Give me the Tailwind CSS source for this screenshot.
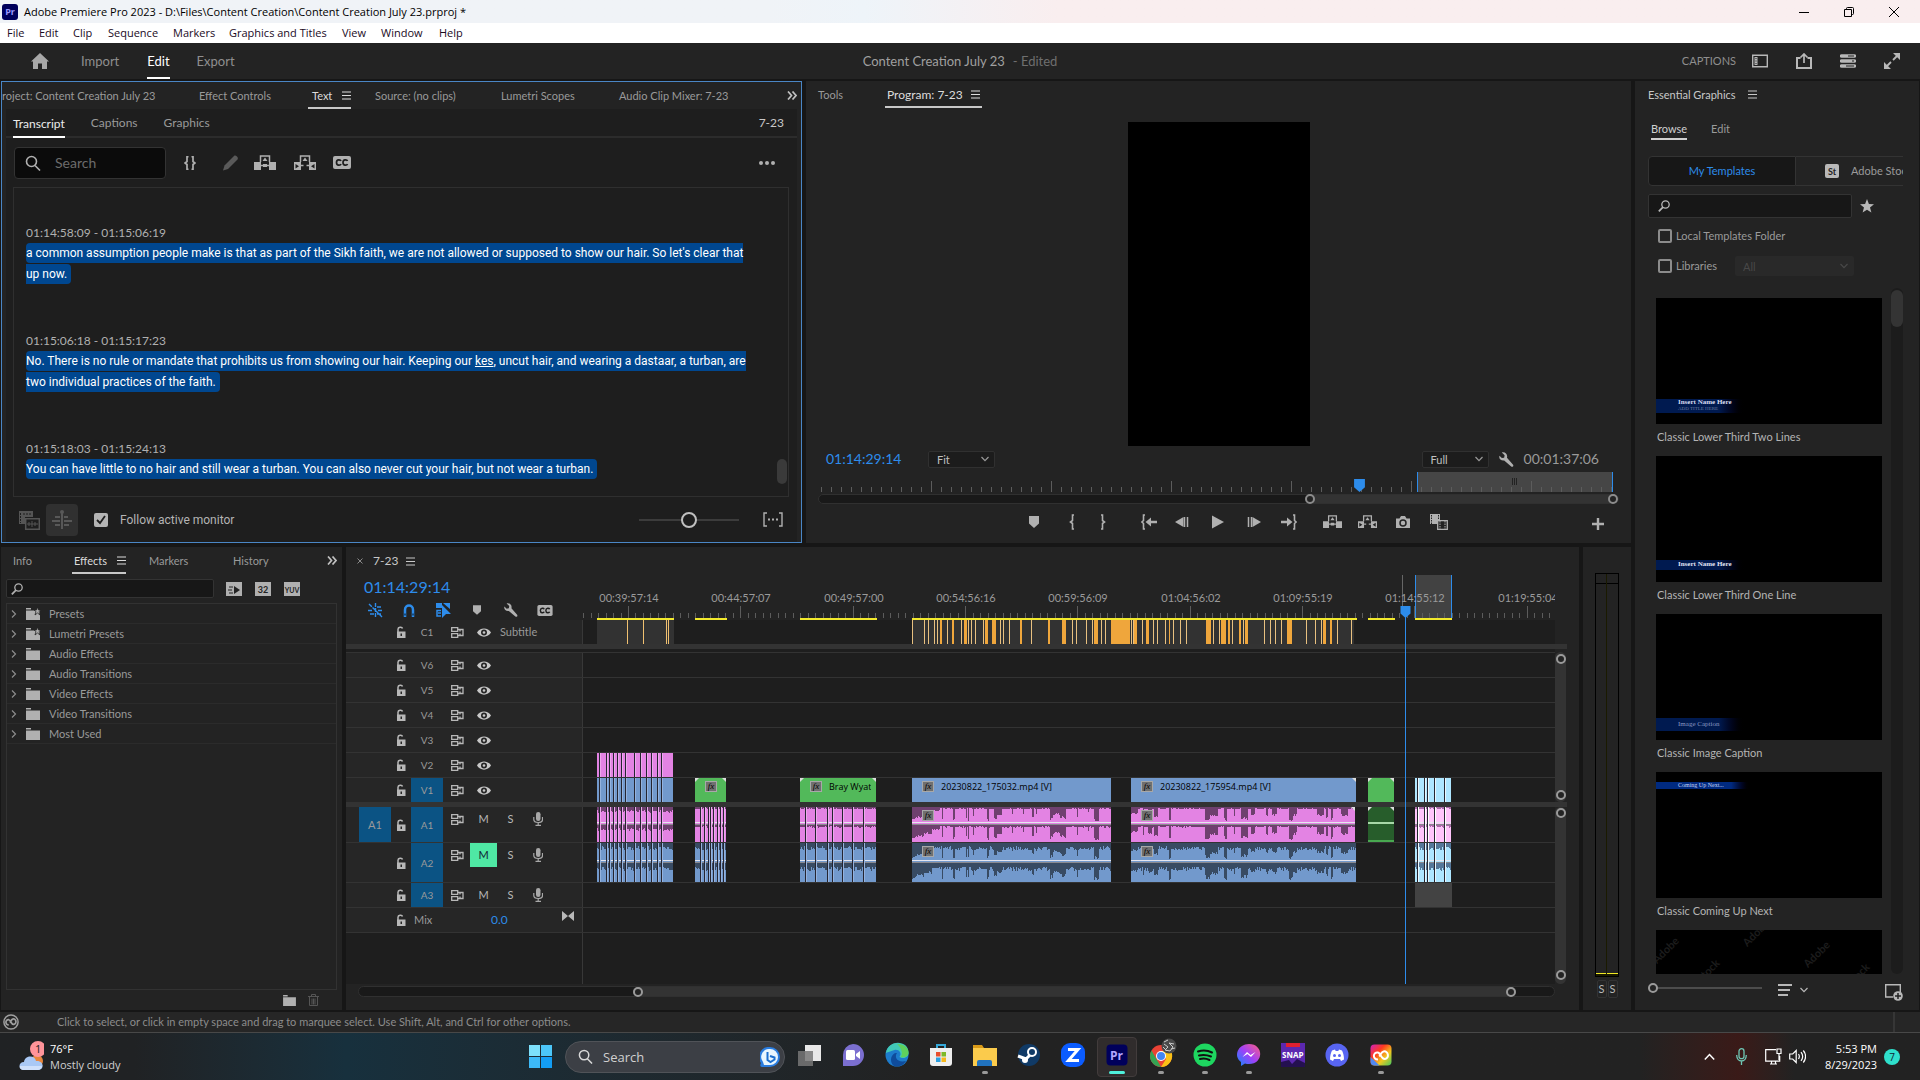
<!DOCTYPE html>
<html lang="en">
<head>
    <meta charset="UTF-8">
    <meta name="viewport" content="width=device-width, initial-scale=1.0">
    <title>Adobe Premiere Pro 2023 - Content Creation July 23</title>
    <script src="https://cdn.jsdelivr.net/npm/@tailwindcss/browser@4"></script>
</head>
<body class="h-screen overflow-hidden flex flex-col bg-[#161616] text-[#9a9a9a] text-[11px] leading-4 font-[family-name:Lato,sans-serif]">

    <!-- icon set -->
    <svg class="hidden">
        <symbol id="menu" viewBox="0 0 9 9"><path d="M0 1h9M0 4.5h9M0 8h9" stroke="currentColor" stroke-width="1.2"/></symbol>
        <symbol id="more" viewBox="0 0 10 9"><path d="M1 .5l3.5 4L1 8.500M5.500 .5l3.500 4-3.500 4" fill="none" stroke="currentColor" stroke-width="1.7"/></symbol>
        <symbol id="chev" viewBox="0 0 8 6"><path d="M.5 1L4 4.600 7.500 1" fill="none" stroke="currentColor" stroke-width="1.200"/></symbol>
        <symbol id="mag" viewBox="0 0 16 16"><circle cx="6.500" cy="6.500" r="5" fill="none" stroke="currentColor" stroke-width="1.600"/><path d="M10 10.500l5 5" stroke="currentColor" stroke-width="1.600"/></symbol>
        <symbol id="magl" viewBox="0 0 12 12"><circle cx="7.500" cy="4.500" r="3.700" fill="none" stroke="currentColor" stroke-width="1.300"/><path d="M5 7.200L.8 11.300" stroke="currentColor" stroke-width="1.800"/></symbol>
        <symbol id="lift" viewBox="0 0 22 16"><path d="M0 7h7v8H0zM15 7h7v8h-7z" fill="currentColor"/><path d="M7 10.500h2.500M12.500 10.500H15M6.500 7V1h9v6" fill="none" stroke="currentColor" stroke-width="1.500"/><path d="M11 2.500l2.500 3.500h-5zM9 9h4v3H9z" fill="currentColor"/></symbol>
        <symbol id="extract" viewBox="0 0 22 16"><path d="M0 7h7v8H0zM15 7h7v8h-7z" fill="currentColor"/><path d="M1.500 9l3.500 2.200-3.500 2.300zM20.500 9L17 11.200l3.500 2.300z" fill="#1e1e1e"/><path d="M7 10.500h2.500M12.500 10.500H15M6.500 7V1h9v6" fill="none" stroke="currentColor" stroke-width="1.500"/><path d="M11 2.500l2.500 3.500h-5z" fill="currentColor"/></symbol>
        <symbol id="cc" viewBox="0 0 18 13"><rect width="18" height="13" rx="2" fill="currentColor"/><path d="M8 5C7.500 3.500 3.500 3 3.500 6.500S7.500 9.500 8 8M14.500 5c-.5-1.500-4.500-2-4.500 1.500s4 3 4.500 1.500" fill="none" stroke="#1e1e1e" stroke-width="1.700"/></symbol>
        <symbol id="marker" viewBox="0 0 10 12"><path d="M0 0h10v7.500L5 12 0 7.500z" fill="currentColor"/></symbol>
        <symbol id="wrench" viewBox="0 0 16 16"><path d="M3 .5L6 3.500 5.500 6 3 6.500.5 4C-.5 7 2 9.500 5.500 9l7.500 6.500c1.500 1 3-.5 2-2L8.500 6C9.500 2.500 6.500-.5 3 .5z" fill="currentColor"/></symbol>
        <symbol id="folder" viewBox="0 0 14 12"><path d="M0 0h5v1.500H0zM0 2.500h14V12H0z" fill="currentColor"/></symbol>
        <symbol id="star" viewBox="0 0 14 14"><path d="M7 0l1.900 4.900 5.100.3-4 3.300 1.400 5L7 10.700l-4.400 2.800L4 8.500 0 5.200l5.100-.3z" fill="currentColor"/></symbol>
        <symbol id="lock" viewBox="0 0 10 12"><path d="M2 6V3.200C2 1 6 .5 6.500 2.500" fill="none" stroke="currentColor" stroke-width="1.500"/><path d="M1 5.500h8.500V12H1z" fill="currentColor"/><path d="M4.500 7.500h1.500v2.500H4.500z" fill="#262626"/></symbol>
        <symbol id="sync" viewBox="0 0 13 11"><path d="M.7.7h6v3.600h-6zM.7 6.700h6v3.600h-6zM6.700 2.500H12v6H6.700M9 2.500v2M9 6.500v2" fill="none" stroke="currentColor" stroke-width="1.300"/></symbol>
        <symbol id="eye" viewBox="0 0 14 9"><path d="M0 4.500C3-1 11-1 14 4.500 11 10 3 10 0 4.500z" fill="currentColor"/><circle cx="7" cy="4.500" r="3" fill="#262626"/><circle cx="7" cy="4.500" r="1.300" fill="currentColor"/></symbol>
        <symbol id="mic" viewBox="0 0 10 14"><rect x="3" width="4.500" height="9" rx="2.200" fill="currentColor"/><path d="M.8 5v2.500c0 4 8.700 4 8.700 0V5M5.200 10.500V13M2.500 13.300h5.500" fill="none" stroke="currentColor" stroke-width="1.200"/></symbol>
    </svg>

    <!-- window title -->
    <header class="flex h-[23px] shrink-0 items-center bg-linear-to-r from-[#f0f3f7] from-40% via-[#eef4f9] via-45% to-[#f9eeef] to-55% pl-0.5 text-black font-[family-name:Open_Sans,sans-serif]">
        <span class="grid size-4 place-items-center rounded-[3px] bg-[#00005b] text-[9px] font-bold text-[#9999ff]">Pr</span>
        <h1 class="ml-1.5 flex-1 whitespace-nowrap text-[11px]">Adobe Premiere Pro 2023 - D:\Files\Content Creation\Content Creation July 23.prproj *</h1>
        <button aria-label="Minimize" class="grid w-[45px] place-items-center"><svg class="size-[10px]" viewBox="0 0 10 10"><path d="M0 5.500h10" stroke="#000"/></svg></button>
        <button aria-label="Restore" class="grid w-[45px] place-items-center"><svg class="size-[10px]" viewBox="0 0 10 10"><path d="M.5 2.500h7v7h-7zM2.500 2.500v-1a1 1 0 011-1h5a1 1 0 011 1v5a1 1 0 01-1 1h-1" fill="none" stroke="#000"/></svg></button>
        <button aria-label="Close" class="mr-1 grid w-[45px] place-items-center"><svg class="size-[10px]" viewBox="0 0 10 10"><path d="M0 0l10 10M10 0L0 10" stroke="#000"/></svg></button>
    </header>
    <nav class="grid h-5 shrink-0 grid-cols-[32px_34px_35px_65px_56px_113px_39px_58px_1fr] items-center justify-items-start bg-white pl-[7px] whitespace-nowrap text-[11px] text-[#1a0a1e] font-[family-name:Open_Sans,sans-serif]">
        <button>File</button><button>Edit</button><button>Clip</button><button>Sequence</button><button>Markers</button><button>Graphics and Titles</button><button>View</button><button>Window</button><button>Help</button>
    </nav>

    <!-- workspace header -->
    <div class="grid h-9 shrink-0 grid-cols-3 bg-[#232323] text-[13px]">
        <div class="flex items-stretch pl-[31px]">
            <button aria-label="Home"><svg class="h-4 w-[18px]" viewBox="0 0 18 16"><path d="M9 0l9 8.500h-2V16h-5v-5.500H7V16H2V8.500H0z" fill="#a8a8a8"/></svg></button>
            <button class="ml-8 text-[#8f8f8f]">Import</button>
            <button class="ml-7 border-y-2 border-t-transparent border-b-white text-white">Edit</button>
            <button class="ml-[27px] text-[#8f8f8f]">Export</button>
        </div>
        <p class="flex items-center justify-center gap-2 text-[13px] text-[#a0a0a0]">Content Creation July 23 <span class="text-[#6f6f6f]">- Edited</span></p>
        <div class="flex items-center justify-end gap-7 pr-5 text-[#b8b8b8]">
            <span class="-mr-3 text-[11px] text-[#8f8f8f]">CAPTIONS</span>
            <button aria-label="Workspaces"><svg class="size-4" viewBox="0 0 16 16"><path d="M.7 2.200h14.600v11.600H.7z" fill="none" stroke="currentColor" stroke-width="1.400"/><path d="M2.500 4h3v8h-3z" fill="currentColor"/><path d="M3.500 5.500h1M3.500 8h1M3.500 10.500h1" stroke="#232323"/></svg></button>
            <button aria-label="Quick export"><svg class="size-4" viewBox="0 0 16 16"><path d="M4.500 5H1v10h14V5h-3.500" fill="none" stroke="currentColor" stroke-width="2"/><path d="M8 10V2M4.500 4.500L8 1l3.500 3.500" fill="none" stroke="currentColor" stroke-width="1.700"/></svg></button>
            <button aria-label="Progress"><svg class="size-4" viewBox="0 0 16 16"><path d="M1.500 3h13M1.500 8h13M1.500 13h13" stroke="currentColor" stroke-width="3.400" stroke-linecap="round"/><path d="M8 3h6M12 8h2M6 13h8" stroke="#232323" stroke-width="1.200"/></svg></button>
            <button aria-label="Full screen"><svg class="size-4" viewBox="0 0 16 16"><path d="M9 0h7v7zM0 9v7h7z" fill="currentColor"/><path d="M9 7l4-4M3 13l4-4" stroke="currentColor" stroke-width="1.800"/></svg></button>
        </div>
    </div>

    <main class="flex min-h-0 flex-1 gap-1 px-px pt-0.5">
        <div class="flex min-w-0 flex-1 flex-col gap-1">
            <div class="flex h-[462px] shrink-0 gap-1">

                <!-- text panel -->
                <section class="flex w-[801px] flex-col border border-[#4a86c5] bg-[#232323] px-1">
                    <div class="-ml-1 grid h-[27px] shrink-0 grid-cols-[197px_109px_67px_126px_118px_168px_1fr] items-stretch justify-items-start overflow-hidden whitespace-nowrap">
                        <button>roject: Content Creation July 23</button>
                        <button>Effect Controls</button>
                        <button class="flex items-center gap-2.5 border-y-2 border-t-transparent border-b-[#c8c8c8] pl-1 text-[#dcdcdc]">Text <svg class="size-[9px]"><use href="#menu"/></svg></button>
                        <button>Source: (no clips)</button>
                        <button>Lumetri Scopes</button>
                        <button>Audio Clip Mixer: 7-23</button>
                        <button aria-label="More panels" class="text-[#c0c0c0]"><svg class="h-[9px] w-[10px]"><use href="#more"/></svg></button>
                    </div>
                    <div class="flex min-h-0 flex-1 flex-col bg-[#1e1e1e]">
                        <div class="flex h-[29px] shrink-0 gap-[26px] border-b-2 border-[#2c2c2c] px-[7px] text-[12px]">
                            <button class="-mb-0.5 border-y-2 border-t-transparent border-b-white text-[#ececec]">Transcript</button>
                            <button>Captions</button>
                            <button>Graphics</button>
                            <span class="ml-auto self-center pr-1.5 text-[#c8c8c8]">7-23</span>
                        </div>
                        <div class="flex h-[49px] shrink-0 items-center pl-2 text-[#b0b0b0]">
                            <label class="flex h-8 w-[152px] items-center gap-3.5 rounded-sm border border-[#333] bg-[#0b0b0b] pl-2.5">
                                <svg class="size-4 shrink-0"><use href="#mag"/></svg>
                                <input type="text" aria-label="Search transcript" placeholder="Search" class="w-20 text-[14px] placeholder:text-[#6c6c6c] outline-none">
                            </label>
                            <button aria-label="Replace" class="ml-[18px]"><svg class="h-[14px] w-3" viewBox="0 0 12 14"><path d="M4.500 .7H3v4.800L1 7l2 1.500v4.800h1.500M7.500 .7H9v4.800L11 7 9 8.500v4.800H7.500" fill="none" stroke="currentColor" stroke-width="1.700"/></svg></button>
                            <button aria-label="Edit text" class="ml-[26px] text-[#5a5a5a]"><svg class="h-4 w-[17px]" viewBox="0 0 17 16"><path d="M1 15.500l1.500-5L12 1c1.500-1.500 5 1.500 3.500 3.500L6 14z" fill="currentColor"/></svg></button>
                            <button aria-label="Lift" class="ml-[15px]"><svg class="h-4 w-[22px]"><use href="#lift"/></svg></button>
                            <button aria-label="Extract" class="ml-[18px]"><svg class="h-4 w-[22px]"><use href="#extract"/></svg></button>
                            <button aria-label="Create captions" class="ml-[17px]"><svg class="h-[13px] w-[18px]"><use href="#cc"/></svg></button>
                            <button aria-label="More options" class="mr-[22px] ml-auto"><svg class="h-1 w-4" viewBox="0 0 16 4"><circle cx="2" cy="2" r="2" fill="currentColor"/><circle cx="8" cy="2" r="2" fill="currentColor"/><circle cx="14" cy="2" r="2" fill="currentColor"/></svg></button>
                        </div>
                        <div class="mr-2 ml-[7px] flex min-h-0 flex-1 justify-between overflow-hidden border border-[#2f2f2f] pl-3">
                            <div class="pt-[34px] text-[12px] leading-[21px] whitespace-nowrap">
                                <p class="text-[#b0b0b0]">01:14:58:09 - 01:15:06:19</p>
                                <p class="h-[87px] text-white font-[family-name:Roboto,sans-serif]"><span class="rounded-sm bg-[#004790] py-[3px] pr-1">a common assumption people make is that as part of the Sikh faith, we are not allowed or supposed to show our hair. So let's clear that<br>up now.</span></p>
                                <p class="text-[#b0b0b0]">01:15:06:18 - 01:15:17:23</p>
                                <p class="h-[87px] text-white font-[family-name:Roboto,sans-serif]"><span class="rounded-sm bg-[#004790] py-[3px] pr-1">No. There is no rule or mandate that prohibits us from showing our hair. Keeping our <u>kes</u>, uncut hair, and wearing a dastaar, a turban, are<br>two individual practices of the faith.</span></p>
                                <p class="text-[#b0b0b0]">01:15:18:03 - 01:15:24:13</p>
                                <p class="text-white font-[family-name:Roboto,sans-serif]"><span class="rounded-sm bg-[#004790] py-[3px] pr-1">You can have little to no hair and still wear a turban. You can also never cut your hair, but not wear a turban.</span></p>
                            </div>
                            <div class="mr-px mb-3 h-[25px] w-2.5 self-end rounded-full bg-[#3a3a3a]"></div>
                        </div>
                        <div class="flex h-[45px] shrink-0 items-center pl-3">
                            <button aria-label="Sequence media" class="text-[#555]"><svg class="h-5 w-[22px]" viewBox="0 0 22 20"><path d="M1 1h14v6H7v7H1z" fill="currentColor"/><path d="M2.500 3v10M5 4h9" stroke="#1e1e1e" stroke-dasharray="2 1"/><path d="M7.700 8.700h13.600v10.600H7.700z" fill="#1e1e1e" stroke="currentColor" stroke-width="1.500"/><path d="M9 14h11M11 12v4M14 11v6M17 12v4" stroke="currentColor"/></svg></button>
                            <button aria-label="Show pauses" class="ml-1.5 grid h-8 w-8 place-items-center rounded-sm bg-[#303030] text-[#585858]"><svg class="h-5 w-[22px]" viewBox="0 0 22 20"><path d="M11 1v18M4 7h5M13 7h4M1 11h8M13 11h8M4 15h5M13 15h5" stroke="currentColor" stroke-width="2"/><circle cx="11" cy="2" r="2" fill="currentColor"/></svg></button>
                            <label class="ml-4 flex items-center gap-3 text-[12px] text-[#b4b4b4] font-[family-name:Roboto,sans-serif]">
                                <span class="relative grid size-3.5 place-items-center">
                                    <input type="checkbox" checked class="size-3.5 appearance-none rounded-xs bg-[#b4b4b4]">
                                    <svg class="pointer-events-none absolute size-2.5" viewBox="0 0 10 10"><path d="M1 5l3 3 5-7" fill="none" stroke="#1e1e1e" stroke-width="1.800"/></svg>
                                </span>
                                Follow active monitor
                            </label>
                            <input type="range" aria-label="Text size" value="50" class="mr-6 ml-auto h-4 w-[100px] appearance-none bg-transparent [&::-webkit-slider-runnable-track]:h-0.5 [&::-webkit-slider-runnable-track]:bg-[#3c3c3c] [&::-webkit-slider-thumb]:-mt-[7px] [&::-webkit-slider-thumb]:size-4 [&::-webkit-slider-thumb]:appearance-none [&::-webkit-slider-thumb]:rounded-full [&::-webkit-slider-thumb]:border-2 [&::-webkit-slider-thumb]:border-[#c0c0c0] [&::-webkit-slider-thumb]:bg-[#1e1e1e]">
                            <button aria-label="Pauses" class="mr-[14px]"><svg class="h-[15px] w-5" viewBox="0 0 20 15"><path d="M4 1H1v13h3M16 1h3v13h-3" fill="none" stroke="#b0b0b0" stroke-width="1.400"/><path d="M5 7.500h2M9 7.500h2M13 7.500h2" stroke="#b0b0b0" stroke-width="2"/></svg></button>
                        </div>
                    </div>
                </section>

                <!-- program monitor -->
                <section class="flex min-w-0 flex-1 flex-col bg-[#232323] px-3">
                    <div class="flex h-[27px] shrink-0 items-stretch">
                        <button class="w-[67px] text-left">Tools</button>
                        <button class="flex items-center gap-2 border-y-2 border-t-transparent border-b-[#c8c8c8] px-0.5 text-[12px] text-[#dcdcdc]">Program: 7-23 <svg class="size-[9px]"><use href="#menu"/></svg></button>
                    </div>
                    <div class="mx-auto mt-3.5 h-[324px] w-[182px] shrink-0 bg-black"></div>
                    <div class="flex h-[26px] shrink-0 items-center pr-5 pl-2">
                        <span class="w-[102px] text-[14px] text-[#2d8ceb]">01:14:29:14</span>
                        <label class="relative flex items-center"><select aria-label="Zoom level" class="h-[17px] w-[67px] appearance-none rounded-xs border border-[#303030] bg-[#1c1c1c] pl-2 text-[11px] leading-none text-[#c0c0c0]"><option>Fit</option></select><svg class="pointer-events-none absolute right-1.5 h-1.5 w-2"><use href="#chev"/></svg></label>
                        <label class="relative ml-auto flex items-center"><select aria-label="Playback resolution" class="h-[17px] w-[67px] appearance-none rounded-xs border border-[#303030] bg-[#1c1c1c] pl-2 text-[11px] leading-none text-[#c0c0c0]"><option>Full</option></select><svg class="pointer-events-none absolute right-1.5 h-1.5 w-2"><use href="#chev"/></svg></label>
                        <button aria-label="Settings" class="mx-2.5 text-[#b0b0b0]"><svg class="size-[15px]"><use href="#wrench"/></svg></button>
                        <span class="text-[14px]">00:01:37:06</span>
                    </div>
                    <div class="relative h-5 shrink-0">
                        <div class="absolute left-[599px] h-5 w-[196px] border-x border-[#2d8ceb] bg-[#464646]"></div>
                        <svg id="programRuler" class="absolute h-5 w-full"></svg>
                        <svg class="absolute top-[7px] left-[536px] h-[13px] w-[11px] text-[#2d8ceb]" viewBox="0 0 10 12"><use href="#marker"/></svg>
                    </div>
                    <div class="mt-0.5 flex h-[10px] shrink-0 items-center rounded-full border border-[#303030] bg-[#191919]">
                        <div class="ml-[490px] flex h-2 w-[308px] items-center justify-between bg-[#333]"><i class="-ml-1 size-2.5 rounded-full border-2 border-[#8c8c8c] bg-[#232323]"></i><i class="-mr-px size-2.5 rounded-full border-2 border-[#8c8c8c] bg-[#232323]"></i></div>
                    </div>
                    <div class="mt-2.5 flex items-center justify-between pr-[15px] text-[#b0b0b0]">
                        <span class="w-[211px]"></span>
                        <div class="grid flex-1 grid-cols-[38px_31px_43px_34px_37px_35px_34px_42px_35px_38px_34px_20px] items-center justify-items-start [&_svg]:h-[16px]">
                            <button aria-label="Add marker"><svg class="w-2.5"><use href="#marker"/></svg></button>
                            <button aria-label="Mark in"><svg class="w-2.5" viewBox="0 0 10 16"><path d="M7 1H5.500v5.500L3.500 8l2 1.500V15H7" fill="none" stroke="currentColor" stroke-width="1.600"/></svg></button>
                            <button aria-label="Mark out"><svg class="w-2.5" viewBox="0 0 10 16"><path d="M3 1h1.500v5.500l2 1.500-2 1.500V15H3" fill="none" stroke="currentColor" stroke-width="1.600"/></svg></button>
                            <button aria-label="Go to in"><svg class="w-4" viewBox="0 0 16 16"><path d="M4 1H2.500v5.500L1 8l1.500 1.500V15H4" fill="none" stroke="currentColor" stroke-width="1.600"/><path d="M4.500 8L10 3.500v9z" fill="currentColor"/><path d="M9 8h7" stroke="currentColor" stroke-width="2.500"/></svg></button>
                            <button aria-label="Step back"><svg class="w-3.5" viewBox="0 0 14 16"><path d="M8.500 3v10L0 8z" fill="currentColor"/><path d="M9.500 3v10M12.500 3v10" stroke="currentColor" stroke-width="1.500"/></svg></button>
                            <button aria-label="Play"><svg class="w-3" viewBox="0 0 12 16"><path d="M0 1.500L12 8 0 14.500z" fill="currentColor"/></svg></button>
                            <button aria-label="Step forward"><svg class="w-3.5" viewBox="0 0 14 16"><path d="M5.500 3v10L14 8z" fill="currentColor"/><path d="M1.500 3v10M4.500 3v10" stroke="currentColor" stroke-width="1.500"/></svg></button>
                            <button aria-label="Go to out"><svg class="w-4" viewBox="0 0 16 16"><path d="M12 1h1.500v5.500L15 8l-1.500 1.500V15H12" fill="none" stroke="currentColor" stroke-width="1.600"/><path d="M11.500 8L6 3.500v9z" fill="currentColor"/><path d="M0 8h7" stroke="currentColor" stroke-width="2.500"/></svg></button>
                            <button aria-label="Lift"><svg class="w-[19px]"><use href="#lift"/></svg></button>
                            <button aria-label="Extract"><svg class="w-[19px]"><use href="#extract"/></svg></button>
                            <button aria-label="Export frame"><svg class="w-3.5" viewBox="0 0 14 16"><path d="M0 4.500h3.500L5 2h4l1.500 2.500H14V14H0z" fill="currentColor"/><circle cx="7" cy="9" r="3" fill="none" stroke="#232323" stroke-width="1.500"/></svg></button>
                            <button aria-label="Comparison view"><svg class="w-[18px]" viewBox="0 0 18 16"><path d="M0 0h10v10H0z" fill="currentColor"/><path d="M1.500 1v9M8.500 1v4" stroke="#232323" stroke-dasharray="1.500 1"/><path d="M7.700 6.700h9.600v8.600H7.700z" fill="#232323" stroke="currentColor" stroke-width="1.300"/><path d="M10 7v8M15 7v8" stroke="currentColor" stroke-dasharray="1.500 1"/></svg></button>
                        </div>
                        <button aria-label="Button editor" class="mt-1"><svg class="size-3" viewBox="0 0 12 12"><path d="M6 0v12M0 6h12" stroke="currentColor" stroke-width="2.400"/></svg></button>
                    </div>
                </section>
            </div>

            <div class="flex min-h-0 flex-1 gap-1">
                <!-- effects -->
                <section class="flex w-[341px] shrink-0 flex-col bg-[#232323] px-[5px]">
                    <div class="grid h-[27px] shrink-0 grid-cols-[59px_77px_84px_94px_1fr] items-stretch justify-items-start pl-[7px]">
                        <button>Info</button>
                        <button class="flex items-center gap-2.5 border-y-2 border-t-transparent border-b-[#c8c8c8] pl-0.5 text-[#dcdcdc]">Effects <svg class="size-[9px]"><use href="#menu"/></svg></button>
                        <button>Markers</button>
                        <button>History</button>
                        <button aria-label="More panels" class="text-[#c0c0c0]"><svg class="h-[9px] w-[10px]"><use href="#more"/></svg></button>
                    </div>
                    <div class="mt-[5px] flex h-[19px] shrink-0 items-center text-[#b0b0b0]">
                        <label class="flex h-[19px] w-[208px] items-center gap-2 rounded-xs border border-[#333] bg-[#171717] pl-1"><svg class="size-3 shrink-0"><use href="#magl"/></svg><input type="text" aria-label="Search effects" class="w-40 outline-none"></label>
                        <div class="ml-3 flex gap-[13px] text-[9px] leading-3 font-bold text-[#232323]">
                            <button class="h-3.5 w-4 border-t-2 border-dotted border-[#b0b0b0] bg-[#b0b0b0]" aria-label="Accelerated effects"><svg class="mx-auto h-2 w-3" viewBox="0 0 12 8"><path d="M1 1h4M0 4h4M1 7h4" stroke="#232323"/><path d="M6 0l6 4-6 4z" fill="#232323"/></svg></button>
                            <button class="h-3.5 w-4 border-t-2 border-dotted border-[#b0b0b0] bg-[#b0b0b0]">32</button>
                            <button class="h-3.5 w-4 border-t-2 border-dotted border-[#b0b0b0] bg-[#b0b0b0] text-[7px]">YUV</button>
                        </div>
                    </div>
                    <ul id="effects" class="mt-[5px] min-h-0 flex-1 border border-[#323232] text-[11px]"></ul>
                    <div class="flex h-5 shrink-0 items-center justify-end gap-3 pr-[18px]"><button aria-label="New bin"><svg class="h-[11px] w-[13px] text-[#b0b0b0]"><use href="#folder"/></svg></button><button aria-label="Delete"><svg class="h-3 w-[11px]" viewBox="0 0 11 12"><path d="M0 2.500h11M3.500 2V.5h4V2M1.500 3v8.500h8V3M4 4.500v6M5.500 4.500v6M7 4.500v6" fill="none" stroke="#555"/></svg></button></div>
                </section>

                <!-- timeline -->
                <section class="relative flex min-w-0 flex-1 flex-col bg-[#232323]">
                    <div class="flex h-[73px] shrink-0">
                        <div class="w-[237px] shrink-0">
                            <div class="flex h-7 items-center pl-[11px] text-[12px] text-[#c8c8c8]"><button aria-label="Close sequence"><svg class="size-1.5" viewBox="0 0 6 6"><path d="M.5.5l5 5M5.500.5l-5 5" stroke="#8a8a8a"/></svg></button><span class="ml-2.5 w-[33px]">7-23</span><svg class="size-[9px]"><use href="#menu"/></svg></div>
                            <div class="pl-[18px] text-[16px] leading-6 text-[#2d8ceb]">01:14:29:14</div>
                            <div class="mt-[3px] flex h-4 items-center pl-[22px] text-[#b0b0b0]">
                                <button aria-label="Nest" class="w-[35px] text-[#2d8ceb]"><svg class="size-[15px]" viewBox="0 0 15 15"><path d="M7.500 0v15M0 7.500h5M10 7.500h5M2 11h4M9 11h4M9 4h4M1 1l13 13" stroke="currentColor" stroke-width="1.400" stroke-dasharray="4 1"/></svg></button>
                                <button aria-label="Snap" class="w-[33px] text-[#2d8ceb]"><svg class="h-[13px] w-3" viewBox="0 0 12 13"><path d="M2 13V6c0-6 8-6 8 0v7" fill="none" stroke="currentColor" stroke-width="2.500"/><path d="M.7 10.500h2.600M8.700 10.500h2.600" stroke="#164a7c" stroke-width="2"/></svg></button>
                                <button aria-label="Linked selection" class="w-[37px] text-[#2d8ceb]"><svg class="size-[15px]" viewBox="0 0 15 15"><path d="M0 0h6v5H0zM7 0h7v6zM6 2l9 9H10l-4 4z" fill="currentColor"/><path d="M5 7.500H1V13h4M2 10h3" fill="none" stroke="currentColor" stroke-width="1.500"/></svg></button>
                                <button aria-label="Add marker" class="w-[31px]"><svg class="h-2.5 w-2"><use href="#marker"/></svg></button>
                                <button aria-label="Timeline settings" class="w-[33px]"><svg class="size-3.5"><use href="#wrench"/></svg></button>
                                <button aria-label="Captions"><svg class="h-[11px] w-4"><use href="#cc"/></svg></button>
                            </div>
                        </div>
                        <div id="ruler" class="relative flex-1 overflow-hidden">
                            <div class="absolute top-7 left-[832px] h-[43px] w-[37px] border-x border-[#2d8ceb] bg-[#424242]"></div>
                            <svg id="rulerTicks" class="absolute inset-0 size-full"></svg>
                            <div class="absolute top-7 left-[819px] h-8 w-px bg-[#666]"></div>
                        </div>
                        <div class="w-6"></div>
                    </div>
                    <div class="flex min-h-0 flex-1 bg-[#1e1e1e]">
                        <div id="tracks" class="flex min-w-0 flex-1 flex-col"></div>
                        <div class="flex w-6 flex-col bg-[#232323]">
                            <div class="mt-6 h-[5px] w-3 bg-[#333]"></div>
                            <div class="mt-[3px] flex h-[150px] w-[11px] flex-col items-center justify-between rounded-full bg-[#333] py-0.5"><i class="size-2.5 rounded-full border-2 border-[#9a9a9a] bg-[#232323]"></i><i class="size-2.5 rounded-full border-2 border-[#9a9a9a] bg-[#232323]"></i></div>
                            <div class="h-[5px] w-3 bg-[#333]"></div>
                            <div class="flex min-h-0 w-[11px] flex-1 flex-col items-center justify-between rounded-full bg-[#333] pt-px pb-1"><i class="size-2.5 rounded-full border-2 border-[#9a9a9a] bg-[#232323]"></i><i class="size-2.5 rounded-full border-2 border-[#9a9a9a] bg-[#232323]"></i></div>
                        </div>
                    </div>
                    <div class="flex h-[26px] shrink-0 pt-0.5 pr-6 pl-3">
                        <div class="flex h-[11px] w-full items-center rounded-full border border-[#303030] bg-[#191919] pr-[38px] pl-[274px]"><div class="flex h-[9px] flex-1 items-center justify-between rounded-full bg-[#333]"><i class="size-2.5 rounded-full border-2 border-[#9a9a9a] bg-[#232323]"></i><i class="size-2.5 rounded-full border-2 border-[#9a9a9a] bg-[#232323]"></i></div></div>
                    </div>
                    <!-- playhead lies over ruler and tracks -->
                    <svg class="absolute top-[59px] left-[1054px] h-3 w-[11px] text-[#2d8ceb]"><use href="#marker"/></svg>
                    <div class="absolute top-[70px] bottom-[26px] left-[1059px] w-px bg-[#2d8ceb]"></div>
                </section>

                <!-- audio meters -->
                <section class="flex w-12 shrink-0 flex-col items-center bg-[#232323] pt-[26px] pb-3">
                    <div class="grid w-6 flex-1 grid-cols-2 divide-x divide-black border border-black">
                        <div class="flex flex-col justify-between border-b-2 border-[#1a1a00]"><i class="h-2.5 border-b border-black"></i><i class="h-px bg-[#f0e824]"></i></div>
                        <div class="flex flex-col justify-between border-b-2 border-[#1a1a00]"><i class="h-2.5 border-b border-black"></i><i class="h-px bg-[#f0e824]"></i></div>
                    </div>
                    <div class="mt-[3px] flex gap-px text-[#b8b8b8]"><button class="h-[18px] w-2.5 rounded-xs border border-[#333]">S</button><button class="h-[18px] w-2.5 rounded-xs border border-[#333]">S</button></div>
                </section>
            </div>
        </div>

        <!-- essential graphics -->
        <section class="flex w-[284px] shrink-0 flex-col bg-[#232323] pl-[13px]">
            <h2 class="flex h-[27px] shrink-0 items-center gap-3 text-[11px] text-[#c8c8c8]">Essential Graphics <svg class="size-[9px]"><use href="#menu"/></svg></h2>
            <div class="mt-2.5 flex h-[22px] shrink-0 gap-6 pl-[3px]"><button class="border-y-2 border-t-transparent border-b-[#d0d0d0] text-[#d0d0d0]">Browse</button><button>Edit</button></div>
            <div class="mt-4 mr-4 flex h-[30px] shrink-0 overflow-hidden whitespace-nowrap">
                <button class="w-[148px] shrink-0 rounded-l-sm border border-[#333] bg-[#171717] text-[#2d8ceb]">My Templates</button>
                <button class="flex w-40 shrink-0 items-center gap-3 border-y border-[#333] pl-[29px]"><span class="grid size-3.5 place-items-center rounded-xs bg-[#b8b8b8] text-[9px] font-bold text-[#232323]">St</span>Adobe Stock</button>
            </div>
            <div class="mt-2 flex h-6 shrink-0 items-center gap-2 text-[#b8b8b8]">
                <label class="flex h-6 w-[204px] items-center gap-2 rounded-xs border border-[#333] bg-[#171717] pl-[9px]"><svg class="size-3 shrink-0"><use href="#magl"/></svg><input type="text" aria-label="Search templates" class="w-40 outline-none"></label>
                <button aria-label="Favorites"><svg class="size-3.5"><use href="#star"/></svg></button>
            </div>
            <div class="mt-2 flex h-5 shrink-0 items-center pl-2.5"><label class="flex items-center gap-1"><input type="checkbox" class="size-3.5 appearance-none rounded-xs border-2 border-[#8c8c8c]">Local Templates Folder</label></div>
            <div class="mt-2.5 flex h-5 shrink-0 items-center pl-2.5"><label class="flex w-[77px] items-center gap-1"><input type="checkbox" class="size-3.5 appearance-none rounded-xs border-2 border-[#8c8c8c]">Libraries</label>
                <label class="relative flex items-center text-[#484848]"><select aria-label="Library" disabled class="h-5 w-[119px] appearance-none rounded-xs bg-[#292929] pl-2 text-[11px] leading-none text-[#484848]"><option>All</option></select><svg class="pointer-events-none absolute right-1.5 h-1.5 w-2"><use href="#chev"/></svg></label>
            </div>
            <div class="mt-3 mr-4 flex min-h-0 flex-1 justify-between overflow-hidden pl-2">
                <div class="w-[226px] pt-2.5 text-[#b4b4b4]">
                    <figure class="mb-[7px]">
                        <div class="flex h-[126px] flex-col justify-end bg-black pb-[11px] font-[family-name:Liberation_Serif,serif]"><div class="h-3.5 w-[90px] bg-linear-to-r from-[#001a50] from-70% to-black pl-[22px] text-[7px] leading-[7px] text-[#6a7aa0]"><b class="block whitespace-nowrap text-[#d8dcf0]">Insert Name Here</b><span class="block text-[5px] leading-[6px] whitespace-nowrap">ADD TITLE HERE</span></div></div>
                        <figcaption class="flex h-[25px] items-center pl-px">Classic Lower Third Two Lines</figcaption>
                    </figure>
                    <figure class="mb-[7px]">
                        <div class="flex h-[126px] flex-col justify-end bg-black pb-3 font-[family-name:Liberation_Serif,serif]"><div class="h-2.5 w-[90px] bg-linear-to-r from-[#001a50] from-70% to-black pl-[22px] text-[7px] leading-[9px] whitespace-nowrap text-[#e0e4f4]"><b>Insert Name Here</b></div></div>
                        <figcaption class="flex h-[25px] items-center pl-px">Classic Lower Third One Line</figcaption>
                    </figure>
                    <figure class="mb-[7px]">
                        <div class="flex h-[126px] flex-col justify-end bg-black pb-[9px] font-[family-name:Liberation_Serif,serif]"><div class="h-[13px] w-[90px] bg-linear-to-r from-[#001a50] from-70% to-black pl-[22px] text-[7px] leading-[13px] whitespace-nowrap text-[#8a98c0]">Image Caption</div></div>
                        <figcaption class="flex h-[25px] items-center pl-px">Classic Image Caption</figcaption>
                    </figure>
                    <figure class="mb-[7px]">
                        <div class="h-[126px] bg-black pt-2.5 font-[family-name:Liberation_Serif,serif]"><div class="h-[7px] w-[94px] bg-linear-to-r from-[#002a80] from-80% to-black pl-[22px] text-[6px] leading-[7px] whitespace-nowrap text-[#c8d4f4]">Coming Up Next...</div></div>
                        <figcaption class="flex h-[25px] items-center pl-px">Classic Coming Up Next</figcaption>
                    </figure>
                    <div class="relative h-[126px] overflow-hidden bg-black text-[11px] font-bold text-[#1c1c1c]">
                        <span class="absolute top-6 left-px -rotate-45 origin-bottom-left pl-1">Adobe</span><span class="absolute top-1 left-[94px] -rotate-45 origin-bottom-left">Adobe</span><span class="absolute top-7 left-[152px] -rotate-45 origin-bottom-left pl-1">Adobe</span><span class="absolute top-10 left-[48px] -rotate-45 origin-bottom-left">Stock</span><span class="absolute top-11 left-[198px] -rotate-45 origin-bottom-left">Stock</span>
                    </div>
                </div>
                <div class="w-3 rounded-full bg-[#1c1c1c] pt-0.5"><div class="h-[37px] rounded-full bg-[#343434]"></div></div>
            </div>
            <div class="flex h-9 shrink-0 items-start pt-1.5 pr-4">
                <input type="range" aria-label="Thumbnail size" value="0" class="h-4 w-[114px] appearance-none bg-transparent [&::-webkit-slider-runnable-track]:h-0.5 [&::-webkit-slider-runnable-track]:bg-[#4c4c4c] [&::-webkit-slider-thumb]:-mt-1 [&::-webkit-slider-thumb]:size-2.5 [&::-webkit-slider-thumb]:appearance-none [&::-webkit-slider-thumb]:rounded-full [&::-webkit-slider-thumb]:border-2 [&::-webkit-slider-thumb]:border-[#9a9a9a] [&::-webkit-slider-thumb]:bg-[#232323]">
                <button aria-label="Sort" class="mt-1 ml-4 flex items-center gap-2 text-[#b8b8b8]"><svg class="h-3 w-3.5" viewBox="0 0 14 12"><path d="M0 1h14M0 6h12M0 11h10" stroke="currentColor" stroke-width="1.800"/></svg><svg class="h-1.5 w-2"><use href="#chev"/></svg></button>
                <button aria-label="New item" class="mt-1 ml-auto text-[#b8b8b8]"><svg class="h-[17px] w-[18px]" viewBox="0 0 18 17"><path d="M8 13H.7V.7h14.600V8" fill="none" stroke="currentColor" stroke-width="1.400"/><circle cx="13" cy="12" r="4.800" fill="currentColor"/><path d="M13 9v6M10 12h6" stroke="#232323" stroke-width="1.500"/></svg></button>
            </div>
        </section>
    </main>

    <!-- status bar -->
    <footer class="mt-0.5 flex h-[21px] shrink-0 items-center border-b border-[#484848] bg-[#262626] pl-[3px] text-[#8c8c8c]">
        <svg class="size-4" viewBox="0 0 14 14"><circle cx="7" cy="7" r="6.200" fill="none" stroke="#a0a0a0" stroke-width="1.300"/><path d="M5 9.500c-3.500 0-3-5 0-4.500 2 .5 2 4.500 4.500 4 3-.6 2-5.500-1-4.500-1.500.5-1.500 2-2.500 3" fill="none" stroke="#a0a0a0" stroke-width="1.500"/></svg>
        <p class="ml-[38px]">Click to select, or click in empty space and drag to marquee select. Use Shift, Alt, and Ctrl for other options.</p>
        <span class="mr-[25px] ml-auto h-full w-0.5 bg-[#363636]"></span>
    </footer>

    <!-- windows taskbar -->
    <div class="grid h-[47px] shrink-0 grid-cols-[529px_1fr_280px] items-center bg-linear-to-r from-[#202224] from-7% via-[#17303d] via-18% to-[#222] to-48% text-[12px] text-white font-[family-name:Open_Sans,sans-serif]">
        <button class="flex items-center gap-1.5 pl-[18px] text-left">
            <svg class="h-8 w-[26px]" viewBox="0 0 26 32"><circle cx="19" cy="20" r="6" fill="#e8863c"/><path d="M6 29c-6 0-6-8 0-8 1-7 11-7 12-1 8-1 9 9 2 9z" fill="#a9c8f5"/><path d="M6 29c-3 0-5-2-4-4h22c0 2-2 4-4 4z" fill="#cfe0fb"/><circle cx="20" cy="8" r="8" fill="#ff949a"/><text x="17" y="12" font-size="11" fill="#222">1</text></svg>
            <span class="text-[11px] leading-4"><span class="block">76°F</span><span class="block text-[#d0d0d0]">Mostly cloudy</span></span>
        </button>
        <div class="flex items-center">
            <button aria-label="Start"><svg class="size-[23px]" viewBox="0 0 23 23"><path d="M0 0h11v11H0z" fill="#7de0fb"/><path d="M12 0h11v11H12z" fill="#4cc6f8"/><path d="M0 12h11v11H0z" fill="#3db9f7"/><path d="M12 12h11v11H12z" fill="#139df4"/></svg></button>
            <label class="ml-[13px] flex h-8 w-[220px] items-center gap-2.5 rounded-full border border-[#505358] bg-[#3c3f45] pr-1 pl-3">
                <svg class="size-[15px] shrink-0 text-[#d8d8d8]"><use href="#mag"/></svg>
                <input type="text" aria-label="Taskbar search" placeholder="Search" class="min-w-0 flex-1 text-[13px] placeholder:text-[#d0d0d0] outline-none">
                <svg class="size-5 shrink-0" viewBox="0 0 20 20"><path d="M10 0a10 10 0 110 20H2c-2 0-2-2-1-4A10 10 0 0110 0z" fill="#2a7de0"/><path d="M10 2a8 8 0 110 16H4l-1-3A8 8 0 0110 2z" fill="#e8f6ff"/><path d="M7.500 5v8l3 2 4-2.500v-2L10 9" fill="none" stroke="#1b6fd0" stroke-width="2"/></svg>
            </label>
            <div id="apps" class="ml-0.5 flex"></div>
        </div>
        <div class="flex h-full items-center bg-linear-to-r from-[#222] via-[#3a1a18] via-35% to-[#222] to-55% pl-[60px] whitespace-nowrap">
            <button aria-label="Hidden icons"><svg class="ml-1 h-2 w-[11px]" viewBox="0 0 11 8"><path d="M.8 6.500l4.700-5 4.700 5" fill="none" stroke="#fff" stroke-width="1.500"/></svg></button>
            <svg class="ml-[21px] h-[17px] w-[11px]" viewBox="0 0 11 17"><rect x="3" y=".7" width="5" height="10" rx="2.500" fill="none" stroke="#6fc7b5" stroke-width="1.300"/><path d="M.7 7c0 8 9.600 8 9.600 0M5.500 13v4" fill="none" stroke="#6fc7b5" stroke-width="1.300"/></svg>
            <svg class="ml-[18px] size-[17px]" viewBox="0 0 17 17"><path d="M11 1.600H.7v11.600h14V8M5 16h7M6.500 13v3M10.500 13v3M12 1h4v4.500h-4zM14 5.500V12" fill="none" stroke="#fff" stroke-width="1.200"/></svg>
            <svg class="ml-[7px] h-[15px] w-[17px]" viewBox="0 0 17 15"><path d="M.7 5h3l3.500-3.500v12L3.700 10h-3zM9.500 5c1 1.500 1 3.500 0 5M12 3.200c2 2.500 2 6 0 8.600M14.300 1.500c3 3.500 3 8.500 0 12" fill="none" stroke="#fff" stroke-width="1.200"/></svg>
            <p class="ml-auto text-right text-[11px] leading-4"><span class="block">5:53 PM</span><span class="block">8/29/2023</span></p>
            <span class="mr-5 ml-[7px] grid size-4 place-items-center rounded-full bg-[#2fe0cc] text-[10px] text-[#123]">7</span>
        </div>
    </div>

    <script>
        // effects tree
        const folders = ['Presets', 'Lumetri Presets', 'Audio Effects', 'Audio Transitions', 'Video Effects', 'Video Transitions', 'Most Used'];
        document.getElementById('effects').innerHTML = folders.map((name, i) => `
            <li class="flex h-5 items-center border-b border-[#2b2b2b]">
                <svg class="ml-1 h-2 w-1.5" viewBox="0 0 6 8"><path d="M1 .5L4.500 4 1 7.500" fill="none" stroke="#8c8c8c" stroke-width="1.200"/></svg>
                <svg class="ml-[9px] h-3 w-[15px] text-[#b0b0b0]" viewBox="0 0 15 12"><path d="M0 0h5v1.500H0zM0 2.500h14V12H0z" fill="currentColor"/>${i < 2 ? '<path d="M11.500-1l1 3H15l-2 1.500L14 7l-2.500-2L9 7l1-3.500L8 2h2.500z" fill="#b0b0b0" stroke="#232323" stroke-width=".8"/>' : ''}</svg>
                <span class="ml-2">${name}</span>
            </li>`).join('');

        // rulers
        let ticks = '';
        for (let i = 0; i < 80; i++) {
            ticks += `<path d="M${3.500 + i * 10} ${i % 12 === 11 ? 9 : 15}V20" stroke="#5c5c5c"/>`;
        }
        document.getElementById('programRuler').innerHTML = ticks + '<path d="M694.500 6v7M696.500 6v7M698.500 6v7" stroke="#222"/>';

        const STEP = 112.35;
        ticks = '';
        for (let i = -6; i < 125; i++) {
            const x = Math.round(45 + i * STEP / 15) + 0.5;
            ticks += `<path d="M${x} ${i % 15 === 0 ? 59 : 66}V71" stroke="#5c5c5c"/>`;
        }
        [[14, 77], [112, 32], [217, 77], [329, 445], [785, 27], [832, 37]].forEach(([x, w]) => {
            ticks += `<rect x="${x}" y="71" width="${w}" height="2" fill="#f2e92c"/>`;
        });
        document.getElementById('rulerTicks').innerHTML = ticks;
        ['00:39:57:14', '00:44:57:07', '00:49:57:00', '00:54:56:16', '00:59:56:09', '01:04:56:02', '01:09:55:19', '01:14:55:12', '01:19:55:04'].forEach((t, i) => {
            document.getElementById('ruler').insertAdjacentHTML('beforeend',
                `<span class="absolute top-[43px] -translate-x-1/2 text-[11px]" style="left:${Math.round(46 + i * STEP)}px">${t}</span>`);
        });

        // small seeded generator so the waveforms stay the same on every load
        let seed = 7;
        const rnd = () => (seed = (seed * 16807) % 2147483647) / 2147483647;

        function wave(w, h, parts, base) {
            let d = 'M0 0';
            for (let x = 0; x < w; x++) {
                const p = parts.find(([a, b]) => x >= a && x < b);
                const depth = p ? p[2] * (0.75 + rnd() * 0.25) : base * (0.5 + rnd() * 0.6);
                d += `V${Math.round(depth * h)}H${x + 1}`;
            }
            return d + 'V0Z';
        }

        const CUTS = {
            a: [2, 9, 12, 16, 20, 24, 28, 37, 43, 49, 54, 60, 64],
            b: [5, 9, 13, 15, 18, 22, 25, 28],
            c: [5, 15, 27, 32, 42, 52, 63],
            d: [2, 9, 12, 19, 29]
        };
        const cutLines = (key, h, light) => (CUTS[key] || []).map(x =>
            `<rect x="${x}" width="1" height="${h}" fill="#252530"/><rect x="${x + 1}" width="1" height="${h}" fill="${light}"/>`).join('');

        const PROFILE = {
            e: [[0, 3, .9], [3, 12, .8], [12, 20, .6], [20, 28, .3], [30, 31, 1], [41, 43, .9], [54, 55, .9], [56, 57, 1], [61, 62, .7], [75, 77, .95], [82, 85, .9], [85, 90, .6], [100, 101, .5], [111, 112, .5], [120, 122, .8], [124, 125, .6], [138, 141, .9], [141, 148, .55], [148, 154, .8], [165, 166, .8], [176, 177, .4], [182, 187, .97]],
            f: [[0, 7, .5], [12, 13, .8], [17, 21, .6], [23, 27, .7], [38, 40, 1], [74, 79, .9], [79, 87, .65], [93, 96, .95], [103, 104, .7], [110, 117, .85], [120, 124, .6], [135, 137, .7], [141, 146, .6], [158, 162, .95], [162, 166, .6], [186, 193, .6], [195, 197, .8], [200, 202, .9], [210, 217, .65]]
        };

        function clip(x, w, h, color, opt = {}) {
            const o = { light: '#94b2de', ...opt };
            let body = `<rect width="${w}" height="${h}" fill="${color}"/>`;
            if (o.dark) {
                const half = Math.floor(h / 2) - 1;
                const parts = PROFILE[o.cut] || [];
                const s = seed;
                const path = wave(w, half - 1, parts, o.base || 0.15);
                seed = s;
                body += `<path d="${path}" fill="${o.dark}"/><path transform="translate(0 ${half + 2})" d="${wave(w, half, parts, o.base || 0.15)}" fill="${o.dark}"/>`;
                body += `<rect y="${half - 1}" width="${w}" height="1" fill="#e6e6ee"/><rect y="${half + 1}" width="${w}" height="1" fill="#8a8a90"/>`;
            }
            body += cutLines(o.cut, h, o.light);
            if (o.ends) body += `<path d="M0 0h4L0 4z" fill="#ddd"/>`;
            if (o.ends || o.tail) body += `<path d="M${w} 0h-4l4 4z" fill="#ddd"/>`;
            const fx = o.fx !== undefined ? `<i class="absolute top-[3px] z-10 grid h-[11px] w-3 place-items-center border border-[#a8a8a8] bg-[#707070] text-[9px] leading-none text-black font-[family-name:Liberation_Serif,serif]" style="left:${x + o.fx}px">fx</i>` : '';
            const label = o.label ? `<span class="absolute top-0.5 overflow-hidden whitespace-nowrap text-[9px] leading-[14px] text-black font-[family-name:Open_Sans,sans-serif]" style="left:${x + o.fx + 19}px">${o.label}</span>` : '';
            return `<svg class="absolute top-0" style="left:${x}px" width="${w}" height="${h}">${body}</svg>${fx}${label}`;
        }

        const PINK = '#e383e3', PLUM = '#6f406f', BLUE = '#7299cc', NAVY = '#384b63', GREEN = '#52b95a';

        // caption blocks on C1
        const marks = [[37, 2], [73, 2], [84, 2], [103, 2], [112, 2], [122, 5], [141, 2], [158, 5], [183, 2], [196, 10], [206, 2], [214, 2], [225, 2], [250, 2], [259, 9], [282, 12], [300, 2], [309, 2], [327, 2], [363, 5], [394, 2], [446, 5], [492, 12], [516, 2], [529, 2], [558, 2], [578, 3], [588, 12], [604, 2], [616, 2], [662, 56], [694, 2], [700, 2], [706, 8], [727, 2], [742, 8], [760, 2], [772, 2], [796, 2], [808, 4], [820, 2], [841, 2], [859, 2], [925, 15], [940, 2], [958, 2], [970, 14], [987, 5], [998, 2], [1020, 5], [1031, 2], [1040, 9], [1094, 2], [1110, 2], [1127, 2], [1143, 2], [1169, 14], [1218, 2], [1246, 2], [1264, 2], [1273, 8], [1293, 6], [1312, 2], [1355, 2]];
        let captions = '<rect x="14" width="77" height="24" fill="#323232"/><rect x="329" width="442" height="24" fill="#323232"/>';
        [44, 60, 83, 85].forEach(x => captions += `<rect x="${x}" width="1" height="24" fill="#f0c070"/>`);
        marks.forEach(([c, w]) => {
            captions += `<rect x="${Math.round(317 + (c - w / 2) / 3)}" width="${Math.max(1, Math.round(w / 3))}" height="24" fill="${w < 4 ? '#e8c080' : '#efa63c'}"/>`;
        });

        const lanes = {
            C1: `<svg class="absolute inset-0" width="972" height="24">${captions}</svg>`,
            V2: clip(14, 76, 24, PINK, { cut: 'a', light: '#eda8ed' }),
            V1: clip(14, 76, 24, BLUE, { cut: 'a' }) + clip(112, 31, 24, GREEN, { ends: true, fx: 10 }) +
                clip(217, 76, 24, GREEN, { ends: true, fx: 10, label: 'Bray Wyat' }) +
                clip(329, 199, 24, BLUE, { fx: 10, label: '20230822_175032.mp4 [V]' }) +
                clip(548, 225, 24, BLUE, { fx: 10, tail: true, label: '20230822_175954.mp4 [V]' }) +
                clip(785, 26, 24, GREEN, { ends: true }) + clip(832, 36, 24, '#aee6ff', { cut: 'd', light: '#e8f8ff' }),
            A1: clip(14, 76, 35, PINK, { cut: 'a', dark: PLUM, base: .35, light: '#eda8ed' }) +
                clip(112, 31, 35, PINK, { cut: 'b', dark: PLUM, light: '#eda8ed' }) +
                clip(217, 76, 35, PINK, { cut: 'c', dark: PLUM, light: '#eda8ed' }) +
                clip(329, 199, 35, PINK, { cut: 'e', dark: PLUM, fx: 10 }) +
                clip(548, 224, 35, PINK, { cut: 'f', dark: PLUM, fx: 10, tail: true }) +
                clip(785, 26, 35, '#275d2b', { ends: true }) +
                '<i class="absolute top-[15px] left-[785px] h-0.5 w-[26px] bg-[#a8d8a8]"></i><i class="absolute top-[33px] left-[785px] h-0.5 w-[26px] bg-[#48a850]"></i>' +
                clip(832, 36, 35, '#ffc4fb', { cut: 'd', dark: '#a96ba8', light: '#fff' }),
            A2: clip(14, 76, 39, BLUE, { cut: 'a', dark: NAVY, base: .4 }) +
                clip(112, 31, 39, BLUE, { cut: 'b', dark: NAVY, base: .4 }) +
                clip(217, 76, 39, BLUE, { cut: 'c', dark: NAVY, base: .4 }) +
                clip(329, 199, 39, BLUE, { cut: 'e', dark: NAVY, base: .4, fx: 10 }) +
                clip(548, 225, 39, BLUE, { cut: 'f', dark: NAVY, base: .4, fx: 10 }) +
                clip(832, 36, 39, '#aee6ff', { cut: 'd', dark: '#557799', base: .4, light: '#e8f8ff' }),
            A3: '<i class="absolute top-0 left-[832px] h-6 w-[37px] bg-[#434343]"></i>'
        };

        const icon = (id, cls) => `<svg class="${cls}"><use href="#${id}"/></svg>`;

        function track(name, h, kind) {
            const on = ['V1', 'A1', 'A2', 'A3'].includes(name);
            const muted = name === 'A2';
            const controls = kind === 'audio'
                ? `<button class="${muted ? 'h-6 w-[27px] bg-[#4fe8a4] text-[#123]' : 'h-6 w-[27px] text-[#b8b8b8]'}">M</button><button class="h-6 w-[27px] text-[#b8b8b8]">S</button><button aria-label="Record" class="grid h-6 w-7 place-items-center text-[#a8a8a8]">${icon('mic', 'h-3.5 w-2.5')}</button>`
                : `<button aria-label="Toggle output" class="grid h-6 w-[27px] place-items-center text-[#c8c8c8]">${icon('eye', 'h-[9px] w-3.5')}</button>${name === 'C1' ? '<span class="pl-[3px] leading-6">Subtitle</span>' : ''}`;
            return `<div class="${h}">
                <div class="flex h-full w-[237px] shrink-0 border-r border-[#383838] bg-[#262626] pl-[13px]">
                    <button class="${name === 'A1' ? 'w-8 bg-[#0b5384]' : 'w-8'}" aria-label="Source patch">${name === 'A1' ? 'A1' : ''}</button>
                    <button aria-label="Lock" class="grid w-5 place-items-center text-[#b8b8b8]">${icon('lock', 'h-3 w-2.5')}</button>
                    <button class="${on ? 'w-8 bg-[#0b5384] text-[10px]' : 'w-8 text-[10px]'}">${name}</button>
                    <button aria-label="Sync lock" class="ml-[3px] mr-px grid h-6 w-[23px] place-items-center text-[#b8b8b8]">${icon('sync', 'h-[11px] w-[13px]')}</button>
                    ${controls}
                </div>
                <div class="relative min-w-0 flex-1 overflow-hidden">${lanes[name] || ''}</div>
            </div>`;
        }

        const bar = '<div class="h-[5px] shrink-0 bg-[#333]"></div>';
        const ROW = 'flex h-[25px] shrink-0 border-t border-[#333]';
        document.getElementById('tracks').innerHTML =
            track('C1', 'flex h-6 shrink-0', 'caption') + bar + '<div class="h-[3px] shrink-0"></div>' +
            ['V6', 'V5', 'V4', 'V3', 'V2', 'V1'].map(n => track(n, ROW, 'video')).join('') + bar +
            track('A1', 'flex h-[35px] shrink-0', 'audio') +
            track('A2', 'flex h-[40px] shrink-0 border-t border-[#333]', 'audio') +
            track('A3', ROW, 'audio') +
            `<div class="flex h-[26px] shrink-0 border-y border-[#333]">
                <div class="flex w-[237px] items-center border-r border-[#383838] bg-[#262626] pl-[50px] text-[11px]">
                    ${icon('lock', 'h-3 w-2.5 text-[#b8b8b8]')}<span class="ml-2 w-[77px]">Mix</span><span class="text-[12px] text-[#2d8ceb]">0.0</span>
                    <svg class="mb-2 ml-auto mr-2 h-2.5 w-3" viewBox="0 0 12 10"><path d="M0 0l6 5-6 5zM12 0L6 5l6 5z" fill="#b8b8b8"/></svg>
                </div>
            </div><div class="w-[237px] flex-1 border-r border-[#383838]"></div>`;

        // taskbar apps: name, drawing, running marker
        const apps = [
            ['Task view', '<path d="M8 2h16v16H8z" fill="#e8e8e8"/><path d="M1 8h15v15H1z" fill="#777" fill-opacity=".85"/>'],
            ['Chat', '<path d="M12 1a11 11 0 110 22H2V12A11 11 0 0112 1z" fill="#7b6fd0"/><rect x="5" y="7" width="9" height="10" rx="1.500" fill="#fff"/><path d="M15 11l4-3v8l-4-3z" fill="#fff"/>'],
            ['Edge', '<circle cx="12" cy="12" r="11.500" fill="#1d7ccc"/><path d="M1 10C3-4 24-3 23.500 10c0 5-6 6-9 4 3-4-1-8-5-7S1 10 1 10z" fill="#41c9b8"/><path d="M12 1c8 0 12 5 11.500 9s-5 5-8 4c3-3 1-9-3.500-13z" fill="#5fd15c"/><path d="M9 23C3 18 7 9 12 10c-3 4 0 10 9 8-3 5-8 6-12 5z" fill="#0f4c9c"/>'],
            ['Store', '<path d="M8 6V2h8v4" fill="none" stroke="#35a8d8" stroke-width="2"/><path d="M1 5h22v15q0 3-3 3H4q-3 0-3-3z" fill="#eee"/><path d="M7 9h4.500v4.500H7z" fill="#e84e2c"/><path d="M12.500 9H17v4.500h-4.500z" fill="#7db928"/><path d="M7 14.500h4.500V19H7z" fill="#2a9fe0"/><path d="M12.500 14.500H17V19h-4.500z" fill="#f6b81c"/>'],
            ['File Explorer', '<path d="M0 2h9l2 3H0z" fill="#d99a18"/><path d="M0 5h24v18H0z" fill="#fbcb4c"/><path d="M4 23v-4q0-2 2-2h11q2 0 2 2v4z" fill="#2173bf"/>', 1],
            ['Steam', '<circle cx="12" cy="12" r="11" fill="#103a66"/><circle cx="15" cy="9" r="4" fill="none" stroke="#fff" stroke-width="2"/><path d="M1 13l8 3 4-4" stroke="#fff" stroke-width="3" fill="none"/><circle cx="8" cy="17" r="3" fill="#fff"/>'],
            ['Zoom', '<rect width="24" height="24" rx="9" fill="#0b5cff"/><path d="M7 6.500h10L7.500 17.500H18" fill="none" stroke="#fff" stroke-width="3"/>'],
            ['Premiere Pro', '<rect x="1.500" y="1.500" width="21" height="21" rx="4" fill="#00005b"/><text x="5" y="16.500" font-size="12" font-weight="bold" fill="#b4a8ff">Pr</text>', 2],
            ['Chrome', '<circle cx="12" cy="13" r="11" fill="#e94235"/><path d="M2.500 7.500L12 24A11 11 0 012.500 7.500z" fill="#34a353"/><path d="M12 24A11 11 0 0022 8H12l5 8z" fill="#fbc116"/><circle cx="12" cy="13" r="5" fill="#fff"/><circle cx="12" cy="13" r="4" fill="#4285f4"/><circle cx="20" cy="3" r="7.500" fill="#4a4a4a"/><path d="M15 1l4 3-3 3 5 1 3-4-4-4 5 1M15-1l4-2M14 4l4 4M22 6l4-1" stroke="#ccc" fill="none"/>', 1],
            ['Spotify', '<circle cx="12" cy="12" r="11.500" fill="#1ed760"/><path d="M5 8.500c5-1.500 10-1 14 1M6 12.500c4-1 8-.6 12 1M7 16c3-.8 6.500-.5 9.500 1" fill="none" stroke="#111" stroke-width="2" stroke-linecap="round"/>', 1],
            ['Messenger', '<defs><linearGradient id="m" x1="0" y1="1" x2="1" y2="0"><stop stop-color="#0a8cff"/><stop offset=".5" stop-color="#a040f8"/><stop offset="1" stop-color="#ff6080"/></linearGradient></defs><path d="M12 1c15 0 15 20 0 20-1 0-3 0-4-.5L4 23v-4C-4 13 1 1 12 1z" fill="url(#m)"/><path d="M5.500 14l4.500-5 3.500 3 5-3-4.500 5-3.500-3z" fill="#fff"/>', 1],
            ['Marvel Snap', '<path d="M0 0h24v24H0z" fill="#5c28b0"/><path d="M5 0h14v4H5z" fill="#e02030"/><path d="M0 19l8-2 3 4 5-5 8 4v4H0z" fill="#241050"/><text x="1" y="15" font-size="8" font-weight="bold" fill="#fff">SNAP</text>'],
            ['Discord', '<circle cx="12" cy="12" r="11.500" fill="#5865f2"/><path d="M5 16.500c0-4 1-7 2-9l3-1 .7 1.500h2.600L14 6.500l3 1c1 2 2 5 2 9l-3 1.500-1-2H9l-1 2z" fill="#fff"/><circle cx="9.500" cy="12.500" r="1.500" fill="#5865f2"/><circle cx="14.500" cy="12.500" r="1.500" fill="#5865f2"/>'],
            ['Creative Cloud', '<defs><linearGradient id="g" x1="0" y1="0" x2="1" y2="1"><stop stop-color="#d020c0"/><stop offset=".35" stop-color="#ff3a20"/><stop offset=".65" stop-color="#f0c820"/><stop offset="1" stop-color="#40c860"/></linearGradient></defs><rect x="1.500" y="1.500" width="21" height="21" rx="4" fill="url(#g)"/><path d="M1.500 14l9 8.500h-5q-4 0-4-4z" fill="#5088f0"/><path d="M9 16.500c-6 0-5-8 0-7 3 .6 3 7 7 6.500 5-.8 3-9-1.500-7.500C12 9 12 12 10 13" fill="none" stroke="#fff" stroke-width="2"/>', 1]
        ];
        document.getElementById('apps').innerHTML = apps.map(([name, art, run]) => `
            <button aria-label="${name}" class="${run === 2 ? 'mx-0.5 flex h-10 w-10 flex-col items-center justify-center rounded-sm border border-[#423c3c] bg-[#302c2c] pt-1' : 'mx-0.5 flex h-10 w-10 flex-col items-center justify-center pt-1'}">
                <svg class="size-6 shrink-0 overflow-visible" viewBox="0 0 24 24">${art}</svg>
                <i class="${run === 2 ? 'mt-1 h-[3px] w-4 rounded-full bg-[#4ff0dc]' : run ? 'mt-1 h-[3px] w-1.5 rounded-full bg-[#9a9a9a]' : 'mt-1 h-[3px]'}"></i>
            </button>`).join('');
    </script>
</body>
</html>
